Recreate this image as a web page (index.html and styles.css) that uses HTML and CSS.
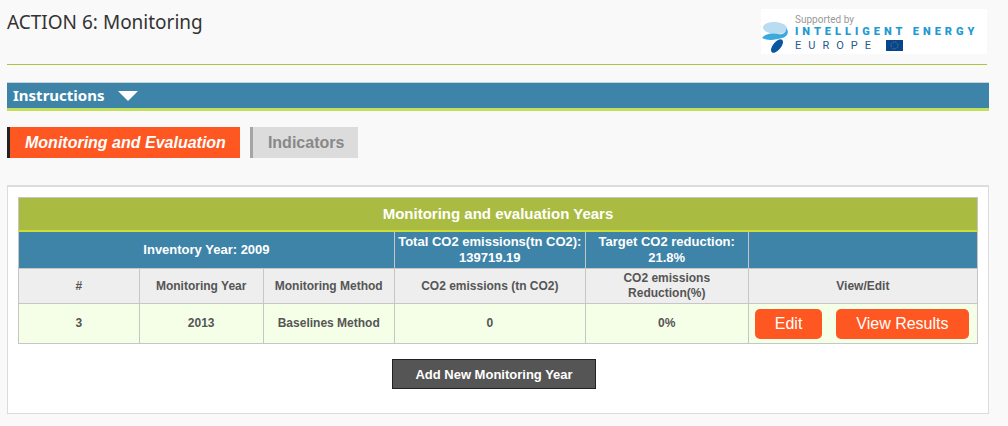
FILE: index.html
```html
<!DOCTYPE html>
<html lang="en">
<head>
<meta charset="utf-8">
<title>ACTION 6: Monitoring</title>
<link rel="stylesheet" href="styles.css">
</head>
<body>
<header class="page-header">
  <h1 class="page-title">ACTION 6: Monitoring</h1>
  <div class="sponsor">
    <svg class="sponsor-mark" viewBox="0 0 28 34" aria-hidden="true">
      <ellipse cx="14" cy="8" rx="12" ry="6" fill="#b9dcf0" transform="rotate(4 14 8)"/>
      <path d="M1 18C5 13 12 13 17 14C22 15 26 12 25 8C29 12 26 17 21 18C14 20 7 21 1 18Z" fill="#3ba9dc"/>
      <ellipse cx="16" cy="26" rx="8" ry="4" fill="#0b56a0" transform="rotate(-50 16 26)"/>
    </svg>
    <div class="sponsor-text">
      <span class="sponsor-small">Supported by</span>
      <span class="sponsor-name">INTELLIGENT ENERGY</span>
      <span class="sponsor-region">EUROPE
        <svg class="flag" viewBox="0 0 17 11" aria-hidden="true">
          <rect width="17" height="11" fill="#07468f"/>
          <circle cx="8.500" cy="5.500" r="3.500" fill="none" stroke="#6f9560" stroke-width="1" stroke-dasharray="0.800 1.030"/>
        </svg>
      </span>
    </div>
  </div>
</header>
<main class="content">
  <button class="instructions" type="button">Instructions
    <svg class="arrow" viewBox="0 0 20 10" aria-hidden="true"><path d="M0 0H20L10 10Z" fill="#fff"/></svg>
  </button>
  <nav class="tabs">
    <a class="tab tab-active" href="#evaluation">Monitoring and Evaluation</a>
    <a class="tab" href="#indicators">Indicators</a>
  </nav>
  <section class="panel" id="evaluation">
    <table class="years">
      <colgroup><col class="c-num"><col class="c-year"><col class="c-method"><col class="c-total"><col class="c-target"><col class="c-action"></colgroup>
      <thead>
        <tr class="row-title"><th colspan="6">Monitoring and evaluation Years</th></tr>
        <tr class="row-summary">
          <th colspan="3">Inventory Year: 2009</th>
          <th>Total CO2 emissions(tn CO2):<br>139719.19</th>
          <th>Target CO2 reduction:<br>21.8%</th>
          <th></th>
        </tr>
        <tr class="row-head">
          <th>#</th><th>Monitoring Year</th><th>Monitoring Method</th><th>CO2 emissions (tn CO2)</th><th>CO2 emissions<br>Reduction(%)</th><th>View/Edit</th>
        </tr>
      </thead>
      <tbody>
        <tr class="row-data">
          <td>3</td><td>2013</td><td>Baselines Method</td><td>0</td><td>0%</td>
          <td class="actions-cell"><div class="actions"><button class="action" type="button">Edit</button><button class="action" type="button">View Results</button></div></td>
        </tr>
      </tbody>
    </table>
    <button class="add" type="button">Add New Monitoring Year</button>
  </section>
</main>
</body>
</html>
```

FILE: styles.css
```css
* { box-sizing: border-box; }
body {
  margin: 0;
  background: #f9f9f9;
  color: #555;
  font-family: "Liberation Sans", Arial, sans-serif;
}
button { font-family: inherit; cursor: pointer; }
.page-header {
  display: flex;
  justify-content: space-between;
  align-items: flex-start;
  height: 65px;
  margin: 0 21px 0 7px;
  padding-top: 9px;
  border-bottom: 1px solid #a8c63f;
}
.page-title {
  margin: 0;
  color: #333;
  font: 400 19px/26px "Noto Sans", Tahoma, sans-serif;
}
.sponsor {
  display: flex;
  gap: 6px;
  width: 226px;
  height: 45px;
  padding-top: 5px;
  background: #fff;
}
.sponsor-mark { width: 28px; height: 34px; margin-top: 6px; flex: none; }
.sponsor-text {
  display: flex;
  flex-direction: column;
  font-family: Roboto, sans-serif;
  white-space: nowrap;
}
.sponsor-small { color: #999; font-size: 10px; line-height: 12px; }
.sponsor-name { color: #1e9bd3; font-size: 11px; font-weight: 900; line-height: 12px; letter-spacing: 4px; }
.sponsor-region {
  display: flex;
  align-items: center;
  gap: 8px;
  color: #28588f;
  font-size: 11px;
  line-height: 15px;
  letter-spacing: 7px;
}
.flag { width: 17px; height: 11px; }
.content { margin: 17px 19px 12px 7px; }
.instructions {
  display: flex;
  align-items: center;
  gap: 14px;
  width: 100%;
  padding: 2px 6px;
  border: 0 solid #c3e05c;
  border-width: 1px 0 3px;
  border-top-color: #c8d3d6;
  background: #3e84a8;
  color: #fff;
  font: 700 15px/21px "Noto Sans", Tahoma, sans-serif;
  text-align: left;
}
.arrow { width: 20px; height: 10px; }
.tabs { display: flex; gap: 10px; margin-top: 16px; }
.tab {
  padding: 0 14px 0 15px;
  border-left: 3px solid #a5a5a5;
  background: #dcdcdc;
  color: #888;
  font-size: 16px;
  font-weight: 700;
  line-height: 31px;
  text-decoration: none;
}
.tab-active { border-color: #222; background: #ff5722; color: #fff; font-style: italic; }
.panel {
  margin-top: 27px;
  padding: 10px 10px 24px;
  border: 1px solid #dcdcdc;
  border-top-width: 2px;
  background: #fff;
  text-align: center;
}
.years { width: 100%; border-collapse: collapse; table-layout: fixed; font-size: 12px; line-height: 15px; }
.years th, .years td { padding: 0; border: 1px solid #c6c6c6; font-weight: 700; }
.c-num { width: 12.6%; }
.c-year { width: 12.9%; }
.c-method { width: 13.7%; }
.c-total { width: 19.9%; }
.c-target { width: 17%; }
.years .row-title th { height: 33px; border-bottom: 2px solid #cddc39; background: #a9bb40; color: #fff; font-size: 15px; }
.row-summary th { height: 38px; background: #3e84a8; color: #fff; font-size: 13px; line-height: 16px; }
.row-head th { height: 35px; background: #eee; }
.row-data td { height: 40px; background: #f5ffe8; }
.actions { display: flex; gap: 14px; padding: 0 6px; }
.action {
  height: 30px;
  padding: 0 20px;
  border: 0;
  border-radius: 5px;
  background: #ff5722;
  color: #fff;
  font-size: 16px;
  white-space: nowrap;
}
.add {
  height: 30px;
  margin: 15px 8px 0 0;
  padding: 0 22px;
  border: 1px solid #222;
  background: #555;
  color: #fff;
  font-size: 13px;
  font-weight: 700;
}
```
